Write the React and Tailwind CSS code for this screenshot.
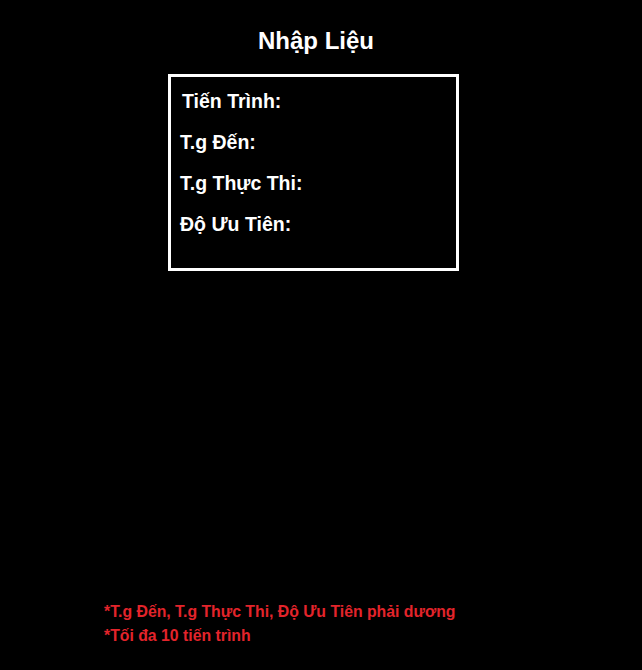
export default function App() {
  const labels = ['Tiến Trình:', 'T.g Đến:', 'T.g Thực Thi:', 'Độ Ưu Tiên:'];

  return (
    <div className="h-screen bg-black text-white font-['Liberation_Sans',Arial,sans-serif] flex flex-col">
      {/* Title */}
      <h1 className="pt-[27px] pr-[10px] text-center text-[24px] leading-[28px] font-bold">Nhập Liệu</h1>

      {/* Input box */}
      <div className="mt-[19px] ml-[168px] w-[291px] border-[3px] border-white pt-[4px] pb-[23px] pl-[9px]">
        {labels.map((label, i) => (
          <div key={label} className={`text-[19.5px] leading-[41px] font-bold ${i === 0 ? 'pl-[2px]' : ''}`}>
            {label}
          </div>
        ))}
      </div>

      {/* Notes */}
      <div className="mt-auto pb-[22px] pl-[104px] text-[15.8px] leading-[24px] font-bold text-[#e3242b]">
        <p>*T.g Đến, T.g Thực Thi, Độ Ưu Tiên phải dương</p>
        <p>*Tối đa 10 tiến trình</p>
      </div>
    </div>
  );
}
